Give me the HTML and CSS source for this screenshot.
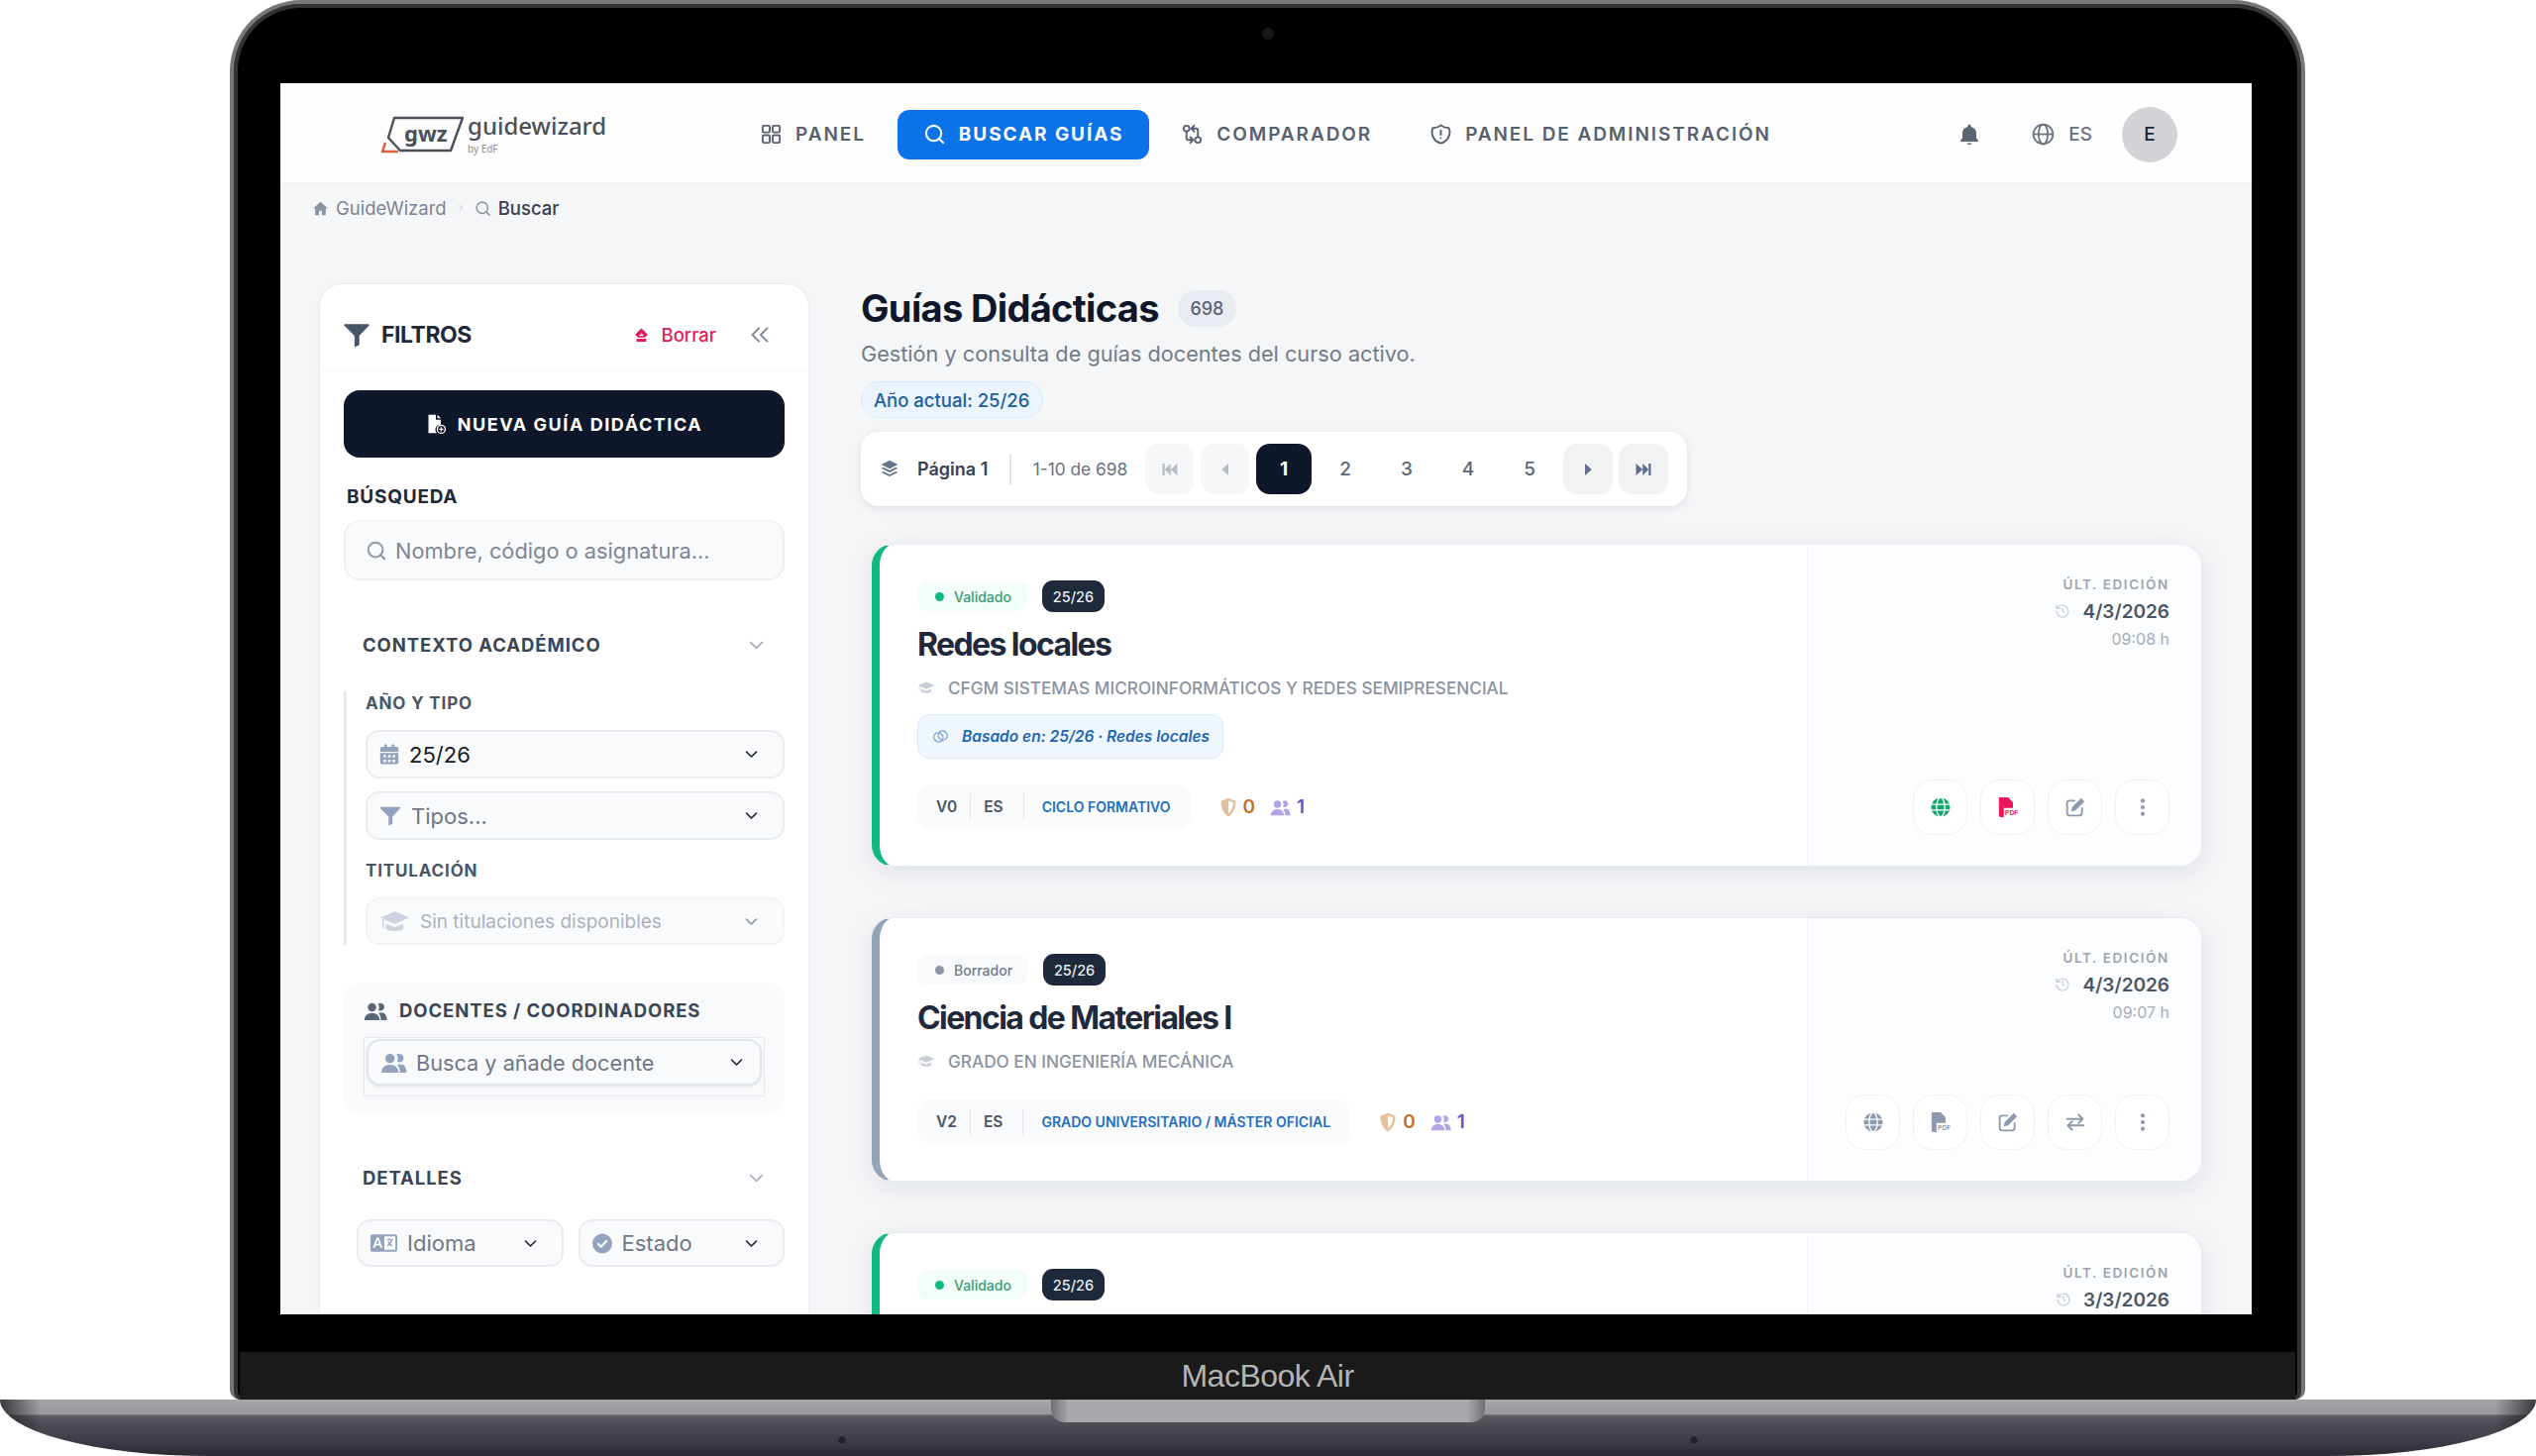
FILE: index.html
```html
<!DOCTYPE html>
<html lang="es">
<head>
  <meta charset="UTF-8">
  <title>GuideWizard - Buscar</title>
  <link rel="stylesheet" href="styles.css">
</head>
<body>
  <!-- icon sprite -->
  <svg class="sprite" xmlns="http://www.w3.org/2000/svg">
    <symbol id="i-grid" viewBox="0 0 24 24"><g fill="none" stroke="currentColor" stroke-width="2"><rect x="3" y="3" width="7.5" height="7" rx="1.5"/><rect x="13.5" y="3" width="7.5" height="7" rx="1.5"/><rect x="3" y="13" width="7.5" height="8" rx="1.5"/><rect x="13.5" y="13" width="7.5" height="8" rx="1.5"/></g></symbol>
    <symbol id="i-search" viewBox="0 0 24 24"><g fill="none" stroke="currentColor" stroke-width="2.2" stroke-linecap="round"><circle cx="11" cy="11" r="8"/><path d="M21 21l-4.4-4.4"/></g></symbol>
    <symbol id="i-compare" viewBox="0 0 24 24"><g fill="none" stroke="currentColor" stroke-width="2" stroke-linecap="round" stroke-linejoin="round"><circle cx="6" cy="6" r="3"/><circle cx="18" cy="18" r="3"/><path d="M11 6h5a2 2 0 0 1 2 2v7M14 9l-3-3 3-3M13 18H8a2 2 0 0 1-2-2V9M10 15l3 3-3 3"/></g></symbol>
    <symbol id="i-shield" viewBox="0 0 24 24"><g fill="none" stroke="currentColor" stroke-width="2" stroke-linecap="round" stroke-linejoin="round"><path d="M12 2.5a12 12 0 0 0 8.5 3A12 12 0 0 1 12 21.5 12 12 0 0 1 3.5 5.5a12 12 0 0 0 8.5-3"/><path d="M12 8v4.5M12 16h.01"/></g></symbol>
    <symbol id="i-bell" viewBox="0 0 24 24"><path fill="currentColor" d="M12 1.5a1.6 1.6 0 0 0-1.6 1.6v.8A7 7 0 0 0 5 10.8v3.6c0 1-.6 2-1.8 3.2-.6.7-.2 1.4.6 1.4h16.4c.8 0 1.2-.7.6-1.4C19.600 16.400 19 15.400 19 14.400v-3.600a7 7 0 0 0-5.400-6.900v-.8A1.600 1.600 0 0 0 12 1.500zM9.600 20.500a2.500 2.500 0 0 0 4.800 0z"/></symbol>
    <symbol id="i-globe" viewBox="0 0 24 24"><g fill="none" stroke="currentColor" stroke-width="1.7"><circle cx="12" cy="12" r="9.5"/><ellipse cx="12" cy="12" rx="4.5" ry="9.5"/><path d="M2.500 12h19"/></g></symbol>
    <symbol id="i-globe-solid" viewBox="0 0 24 24"><circle cx="12" cy="12" r="11.5" fill="currentColor"/><g fill="none" stroke="#fff" stroke-width="1.6"><ellipse cx="12" cy="12" rx="5" ry="11.5"/><path d="M.5 8.500h23M.5 15.500h23"/></g></symbol>
    <symbol id="i-home" viewBox="0 0 24 24"><path fill="currentColor" d="M12 2.500L1.500 12h3v9.500h5.500v-6.500h4v6.500h5.500V12h3z"/></symbol>
    <symbol id="i-chev-right" viewBox="0 0 24 24"><path fill="none" stroke="currentColor" stroke-width="2.4" d="M8 4l8 8-8 8"/></symbol>
    <symbol id="i-chev-down" viewBox="0 0 24 24"><path fill="none" stroke="currentColor" stroke-width="2.6" stroke-linecap="round" stroke-linejoin="round" d="M4 8l8 8 8-8"/></symbol>
    <symbol id="i-funnel" viewBox="0 0 24 24"><path fill="currentColor" d="M1 2h22c.8 0 1 .8.600 1.300L14.500 13v8.500L10 23.500V13L.4 3.300C0 2.800.2 2 1 2z"/></symbol>
    <symbol id="i-eraser" viewBox="0 0 24 24"><path fill="currentColor" d="M12 2l9 9-4 4H7l-4-4zM5 17h14v4H5z"/><path fill="#fff" d="M9 12l3-3 3 3-1 1h-4z"/></symbol>
    <symbol id="i-dchev" viewBox="0 0 24 24"><path fill="none" stroke="currentColor" stroke-width="2.2" stroke-linecap="round" stroke-linejoin="round" d="M11 4l-8 8 8 8M21 4l-8 8 8 8"/></symbol>
    <symbol id="i-file-plus" viewBox="0 0 24 24"><path fill="currentColor" d="M3 1h9v6h6v6a6 6 0 0 0-5 10H3zM14 1l4 4h-4z"/><circle cx="18.500" cy="18.500" r="4.800" fill="none" stroke="currentColor" stroke-width="1.6"/><path stroke="currentColor" stroke-width="1.6" d="M18.500 16v5M16 18.500h5"/></symbol>
    <symbol id="i-calendar" viewBox="0 0 24 24"><path fill="currentColor" d="M6 0h3v3h6V0h3v3h3a2 2 0 0 1 2 2v4H1V5a2 2 0 0 1 2-2h3zM1 10.500h22V22a2 2 0 0 1-2 2H3a2 2 0 0 1-2-2z"/><path fill="#fff" d="M5 13h3v3H5zM10.500 13h3v3h-3zM16 13h3v3h-3zM5 18.500h3v3H5zM10.500 18.500h3v3h-3zM16 18.500h3v3h-3z"/></symbol>
    <symbol id="i-cap" viewBox="0 0 32 24"><path fill="currentColor" d="M16 2L1 8.500l15 6.500 15-6.500zM7 14.500V20c3 3 15 3 18 0v-5.500l-9 4zM3 10v9h1.500v-9z"/></symbol>
    <symbol id="i-users" viewBox="0 0 28 24"><path fill="currentColor" d="M10 3a5 5 0 1 1 0 10 5 5 0 0 1 0-10zM20 3a4.500 4.500 0 1 1-2.500 8.300A7 7 0 0 0 17 4 4.500 4.500 0 0 1 20 3zM1 23c0-5 3.500-8.500 9-8.500s9 3.500 9 8.500zM20.500 23c0-3.500-1-6.400-3-8.300A9 9 0 0 1 21 14c4 0 6.500 3.500 6.500 9z"/></symbol>
    <symbol id="i-lang" viewBox="0 0 28 20"><path fill="currentColor" d="M2 1h24a2 2 0 0 1 2 2v14a2 2 0 0 1-2 2H2a2 2 0 0 1-2-2V3a2 2 0 0 1 2-2z"/><rect x="14.500" y="3" width="11.500" height="14" fill="#fff"/><path fill="#fff" d="M6.500 4h2l4 11h-2l-.8-2.500H5.300L4.500 15h-2zM5.900 10.800h3.200L7.500 6.200z"/><path fill="none" stroke="currentColor" stroke-width="1.500" d="M17 6.500h6.500M20 5v1.500M22 6.500c-.5 3-2.500 5.500-4.500 6.500M18.500 8.500c1 2 2.500 3.500 4.500 4.500"/></symbol>
    <symbol id="i-check" viewBox="0 0 24 24"><circle cx="12" cy="12" r="12" fill="currentColor"/><path fill="none" stroke="#fff" stroke-width="2.6" stroke-linecap="round" stroke-linejoin="round" d="M7 12.500l3.500 3.500L17 9"/></symbol>
    <symbol id="i-layers" viewBox="0 0 24 24"><path fill="currentColor" d="M12 1l10 5-10 5L2 6zM2 10.500l2.500-1.200L12 13l7.500-3.700 2.500 1.200-10 5zM2 15.500l2.500-1.200L12 18l7.500-3.700 2.500 1.200-10 5z"/></symbol>
    <symbol id="i-first" viewBox="0 0 24 24"><path fill="currentColor" d="M2 4h3v16H2zM13 4v16L5 12zM22 4v16l-9-8z"/></symbol>
    <symbol id="i-last" viewBox="0 0 24 24"><path fill="currentColor" d="M22 4h-3v16h3zM11 4v16l8-8zM2 4v16l9-8z"/></symbol>
    <symbol id="i-prev" viewBox="0 0 24 24"><path fill="currentColor" d="M16 4v16L7 12z"/></symbol>
    <symbol id="i-next" viewBox="0 0 24 24"><path fill="currentColor" d="M8 4v16l9-8z"/></symbol>
    <symbol id="i-link" viewBox="0 0 24 24"><g fill="none" stroke="currentColor" stroke-width="2.2"><rect x="1.500" y="6" width="14" height="15" rx="7" transform="rotate(-45 8.500 13.500)"/><rect x="8.500" y="3" width="14" height="15" rx="7" transform="rotate(-45 15.500 10.500)"/></g></symbol>
    <symbol id="i-shield-half" viewBox="0 0 24 24"><path fill="currentColor" opacity=".45" d="M12 1l9 3.500c0 8-2.500 15-9 18.500-6.500-3.500-9-10.500-9-18.500z"/><path fill="#fff" d="M12 4l6 2.300c0 5.500-2 10.500-6 13.200z"/></symbol>
    <symbol id="i-history" viewBox="0 0 24 24"><g fill="none" stroke="currentColor" stroke-width="1.8" stroke-linecap="round" stroke-linejoin="round"><path d="M3 12a9 9 0 1 0 3-6.700L3 8M3 3v5h5M12 7v5l3 2"/></g></symbol>
    <symbol id="i-pdf" viewBox="0 0 24 24"><path fill="currentColor" d="M1 0h11l6 6v7H7v11H3a2 2 0 0 1-2-2z"/><text class="pdf-label" x="8.500" y="22" fill="currentColor">PDF</text></symbol>
    <symbol id="i-edit" viewBox="0 0 24 24"><g fill="none" stroke="currentColor" stroke-width="2.2" stroke-linecap="round" stroke-linejoin="round"><path d="M20 13v6a3 3 0 0 1-3 3H5a3 3 0 0 1-3-3V7a3 3 0 0 1 3-3h6"/></g><path fill="currentColor" d="M19 1l4 4L12 16l-5 1 1-5z"/></symbol>
    <symbol id="i-swap" viewBox="0 0 24 24"><g fill="none" stroke="currentColor" stroke-width="2.4" stroke-linecap="round" stroke-linejoin="round"><path d="M2 8h19M16 3l5 5-5 5M22 16H3M8 11l-5 5 5 5"/></g></symbol>
    <symbol id="i-dots" viewBox="0 0 24 24"><circle cx="12" cy="4" r="2.500" fill="currentColor"/><circle cx="12" cy="12" r="2.500" fill="currentColor"/><circle cx="12" cy="20" r="2.500" fill="currentColor"/></symbol>
  </svg>

  <div class="lid">
    <div class="bezel-top"><span class="camera"></span></div>
    <div class="screen">

      <header class="topbar">
        <a class="logo">
          <svg class="logo-mark" viewBox="0 0 86 40">
            <path fill="none" stroke="#4b5058" stroke-width="2.4" stroke-linejoin="round" d="M14 3h69L71 36H20L8 23z"/>
            <path fill="none" stroke="#d9603c" stroke-width="2.4" d="M5 28L2 37h16"/>
            <text class="logo-gwz" x="24" y="27">gwz</text>
          </svg>
          <span class="logo-text">
            <span class="logo-name">guidewizard</span>
            <span class="logo-by">by EdF</span>
          </span>
        </a>
        <nav class="nav">
          <a class="nav-link"><svg class="nav-icon"><use href="#i-grid"/></svg>PANEL</a>
          <a class="nav-link nav-active"><svg class="nav-icon"><use href="#i-search"/></svg>BUSCAR GUÍAS</a>
          <a class="nav-link"><svg class="nav-icon"><use href="#i-compare"/></svg>COMPARADOR</a>
          <a class="nav-link"><svg class="nav-icon"><use href="#i-shield"/></svg>PANEL DE ADMINISTRACIÓN</a>
        </nav>
        <div class="top-right">
          <svg class="bell"><use href="#i-bell"/></svg>
          <span class="lang"><svg class="lang-icon"><use href="#i-globe"/></svg>ES</span>
          <span class="avatar">E</span>
        </div>
      </header>

      <div class="crumbs">
        <svg class="crumb-icon"><use href="#i-home"/></svg>
        <span>GuideWizard</span>
        <svg class="crumb-sep"><use href="#i-chev-right"/></svg>
        <svg class="crumb-icon"><use href="#i-search"/></svg>
        <span class="crumb-now">Buscar</span>
      </div>

      <div class="content">
        <aside class="sidebar">
          <div class="side-head">
            <svg class="side-funnel"><use href="#i-funnel"/></svg>
            <span class="side-title">FILTROS</span>
            <a class="clear"><svg class="clear-icon"><use href="#i-eraser"/></svg>Borrar</a>
            <svg class="collapse"><use href="#i-dchev"/></svg>
          </div>
          <div class="side-body">
            <button class="new-btn"><svg class="new-icon"><use href="#i-file-plus"/></svg>NUEVA GUÍA DIDÁCTICA</button>

            <div class="field-label">BÚSQUEDA</div>
            <div class="search">
              <svg class="search-icon"><use href="#i-search"/></svg>
              <span>Nombre, código o asignatura...</span>
            </div>

            <div class="section-head">
              <span>CONTEXTO ACADÉMICO</span>
              <svg class="section-chev"><use href="#i-chev-down"/></svg>
            </div>
            <div class="ctx">
              <div class="sub-label">AÑO Y TIPO</div>
              <div class="select select-value">
                <svg class="sel-icon"><use href="#i-calendar"/></svg><span class="sel-text">25/26</span>
                <svg class="sel-chev"><use href="#i-chev-down"/></svg>
              </div>
              <div class="select select-next">
                <svg class="sel-icon sel-funnel"><use href="#i-funnel"/></svg><span class="sel-text">Tipos...</span>
                <svg class="sel-chev"><use href="#i-chev-down"/></svg>
              </div>
              <div class="sub-label sub-label-gap">TITULACIÓN</div>
              <div class="select select-off">
                <svg class="sel-icon sel-cap"><use href="#i-cap"/></svg><span class="sel-text">Sin titulaciones disponibles</span>
                <svg class="sel-chev"><use href="#i-chev-down"/></svg>
              </div>
            </div>

            <div class="docentes">
              <div class="doc-head"><svg class="doc-icon"><use href="#i-users"/></svg>DOCENTES / COORDINADORES</div>
              <div class="doc-frame">
                <div class="select select-doc">
                  <svg class="sel-icon sel-users"><use href="#i-users"/></svg><span class="sel-text">Busca y añade docente</span>
                  <svg class="sel-chev"><use href="#i-chev-down"/></svg>
                </div>
              </div>
            </div>

            <div class="section-head">
              <span>DETALLES</span>
              <svg class="section-chev"><use href="#i-chev-down"/></svg>
            </div>
            <div class="detail-row">
              <div class="select">
                <svg class="sel-icon sel-lang"><use href="#i-lang"/></svg><span class="sel-text">Idioma</span>
                <svg class="sel-chev"><use href="#i-chev-down"/></svg>
              </div>
              <div class="select">
                <svg class="sel-icon"><use href="#i-check"/></svg><span class="sel-text">Estado</span>
                <svg class="sel-chev"><use href="#i-chev-down"/></svg>
              </div>
            </div>
          </div>
        </aside>

        <main class="main">
          <div class="title-row">
            <h1>Guías Didácticas</h1>
            <span class="count">698</span>
          </div>
          <p class="lead">Gestión y consulta de guías docentes del curso activo.</p>
          <span class="year-pill">Año actual: 25/26</span>

          <div class="pager">
            <svg class="pager-layers"><use href="#i-layers"/></svg>
            <span class="pager-page">Página 1</span>
            <span class="pager-div"></span>
            <span class="pager-range">1-10 de 698</span>
            <div class="pager-btns">
              <a class="pg pg-nav pg-off"><svg class="pg-icon"><use href="#i-first"/></svg></a>
              <a class="pg pg-nav pg-off"><svg class="pg-icon"><use href="#i-prev"/></svg></a>
              <a class="pg pg-on">1</a>
              <a class="pg">2</a>
              <a class="pg">3</a>
              <a class="pg">4</a>
              <a class="pg">5</a>
              <a class="pg pg-nav"><svg class="pg-icon"><use href="#i-next"/></svg></a>
              <a class="pg pg-nav"><svg class="pg-icon"><use href="#i-last"/></svg></a>
            </div>
          </div>

          <article class="card card-ok">
            <div class="card-main">
              <div class="card-tags">
                <span class="status status-ok"><i class="dot"></i>Validado</span>
                <span class="card-year">25/26</span>
              </div>
              <h2>Redes locales</h2>
              <div class="subject"><svg class="subject-icon"><use href="#i-cap"/></svg>CFGM SISTEMAS MICROINFORMÁTICOS Y REDES SEMIPRESENCIAL</div>
              <div class="based"><svg class="based-icon"><use href="#i-link"/></svg>Basado en: 25/26 · Redes locales</div>
              <div class="meta-row">
                <div class="meta">
                  <span class="meta-v">V0</span><span class="meta-lang">ES</span><span class="meta-type">CICLO FORMATIVO</span>
                </div>
                <span class="stat stat-orange"><svg class="stat-icon"><use href="#i-shield-half"/></svg>0</span>
                <span class="stat stat-purple"><svg class="stat-users"><use href="#i-users"/></svg>1</span>
              </div>
            </div>
            <div class="card-side">
              <div class="edit-label">ÚLT. EDICIÓN</div>
              <div class="edit-date"><svg class="edit-icon"><use href="#i-history"/></svg>4/3/2026</div>
              <div class="edit-time">09:08 h</div>
              <div class="actions">
                <a class="act act-green"><svg class="act-icon"><use href="#i-globe-solid"/></svg></a>
                <a class="act act-red"><svg class="act-icon"><use href="#i-pdf"/></svg></a>
                <a class="act"><svg class="act-icon"><use href="#i-edit"/></svg></a>
                <a class="act"><svg class="act-icon"><use href="#i-dots"/></svg></a>
              </div>
            </div>
          </article>

          <article class="card card-draft">
            <div class="card-main">
              <div class="card-tags">
                <span class="status status-draft"><i class="dot"></i>Borrador</span>
                <span class="card-year">25/26</span>
              </div>
              <h2>Ciencia de Materiales I</h2>
              <div class="subject"><svg class="subject-icon"><use href="#i-cap"/></svg>GRADO EN INGENIERÍA MECÁNICA</div>
              <div class="meta-row">
                <div class="meta">
                  <span class="meta-v">V2</span><span class="meta-lang">ES</span><span class="meta-type">GRADO UNIVERSITARIO / MÁSTER OFICIAL</span>
                </div>
                <span class="stat stat-orange"><svg class="stat-icon"><use href="#i-shield-half"/></svg>0</span>
                <span class="stat stat-purple"><svg class="stat-users"><use href="#i-users"/></svg>1</span>
              </div>
            </div>
            <div class="card-side">
              <div class="edit-label">ÚLT. EDICIÓN</div>
              <div class="edit-date"><svg class="edit-icon"><use href="#i-history"/></svg>4/3/2026</div>
              <div class="edit-time">09:07 h</div>
              <div class="actions">
                <a class="act"><svg class="act-icon"><use href="#i-globe-solid"/></svg></a>
                <a class="act"><svg class="act-icon"><use href="#i-pdf"/></svg></a>
                <a class="act"><svg class="act-icon"><use href="#i-edit"/></svg></a>
                <a class="act"><svg class="act-icon"><use href="#i-swap"/></svg></a>
                <a class="act"><svg class="act-icon"><use href="#i-dots"/></svg></a>
              </div>
            </div>
          </article>

          <article class="card card-ok card-cut">
            <div class="card-main">
              <div class="card-tags">
                <span class="status status-ok"><i class="dot"></i>Validado</span>
                <span class="card-year">25/26</span>
              </div>
            </div>
            <div class="card-side">
              <div class="edit-label">ÚLT. EDICIÓN</div>
              <div class="edit-date"><svg class="edit-icon"><use href="#i-history"/></svg>3/3/2026</div>
            </div>
          </article>
        </main>
      </div>
    </div>
    <div class="bezel-gap"></div>
    <div class="chin">MacBook Air</div>
  </div>

  <div class="base">
    <div class="notch"></div>
    <div class="screws"><i class="screw"></i><i class="screw"></i></div>
  </div>
</body>
</html>
```

FILE: styles.css
```css
* {
  box-sizing: border-box;
}
body {
  margin: 0;
  height: 1470px;
  overflow: hidden;
  background: #fff;
  font-family: Inter, "Liberation Sans", sans-serif;
  color: #1e293b;
}
.sprite {
  display: none;
}
svg {
  display: block;
  flex: none;
}
.pdf-label {
  font-family: Inter, sans-serif;
  font-size: 8px;
  font-weight: 700;
}

/* laptop */
.lid {
  width: 2095px;
  height: 1413px;
  margin-left: 232px;
  display: flex;
  flex-direction: column;
  background: #000;
  border: 4px solid #77777a;
  border-bottom: 0;
  border-radius: 72px 72px 10px 10px;
  box-shadow: inset 0 0 0 4px #333335;
}
.bezel-top {
  height: 80px;
  flex: none;
  display: flex;
  align-items: center;
  justify-content: center;
  padding-bottom: 20px;
}
.camera {
  width: 12px;
  height: 12px;
  border-radius: 50%;
  background: #16171d;
}
.screen {
  width: 1990px;
  height: 1243px;
  margin-left: 47px;
  flex: none;
  display: flex;
  flex-direction: column;
  overflow: hidden;
  background: #f4f6f8;
}
.bezel-gap {
  height: 38px;
  flex: none;
}
.chin {
  flex: 1;
  display: flex;
  align-items: center;
  justify-content: center;
  margin: 0 6px;
  background: #1a1a1a;
  color: #b4b4b4;
  font-size: 32px;
  letter-spacing: -0.5px;
  font-family: "Liberation Sans", sans-serif;
}
.base {
  height: 57px;
  display: flex;
  flex-direction: column;
  align-items: center;
  background:
    linear-gradient(90deg, rgba(20, 20, 24, 0.75), rgba(20, 20, 24, 0) 1.6%, rgba(20, 20, 24, 0) 98.4%, rgba(20, 20, 24, 0.75)),
    linear-gradient(#a3a5a8 0, #98999d 15px, #5f6065 16px, #4f5057 22px, #383942 45px, #282931 100%);
  border-radius: 0 0 212px 212px / 0 0 57px 57px;
}
.notch {
  width: 438px;
  height: 23px;
  flex: none;
  background: linear-gradient(90deg, #6f7074, #a7a8ab 4%, #a7a8ab 96%, #6f7074);
  border-radius: 0 0 14px 14px;
}
.screws {
  width: 870px;
  margin-top: 13px;
  display: flex;
  justify-content: space-between;
}
.screw {
  width: 10px;
  height: 10px;
  border-radius: 50%;
  background: #24252b;
  border: 1px solid #484951;
}

/* top bar */
.topbar {
  height: 101px;
  flex: none;
  display: flex;
  align-items: center;
  padding: 3px 75px 0 101px;
  background: #fdfdfe;
  border-bottom: 1px solid #eef1f4;
}
.logo {
  width: 227px;
  margin-right: 130px;
  display: flex;
  align-items: center;
  gap: 2px;
}
.logo-mark {
  width: 86px;
  height: 40px;
}
.logo-gwz {
  font-family: "Noto Sans", sans-serif;
  font-size: 22px;
  font-weight: 700;
  fill: #4b5058;
}
.logo-text {
  display: flex;
  flex-direction: column;
  margin-bottom: 5px;
  color: #4b5058;
  font-family: "Noto Sans", sans-serif;
}
.logo-name {
  font-size: 24px;
  font-weight: 500;
}
.logo-by {
  font-size: 10px;
  color: #8a8f97;
}
.nav {
  display: flex;
  gap: 6px;
}
.nav-link {
  height: 50px;
  display: flex;
  align-items: center;
  gap: 13px;
  padding: 0 26px;
  border-radius: 12px;
  color: #58616e;
  font-size: 19px;
  font-weight: 600;
  letter-spacing: 0.101em;
}
.nav-active {
  background: #0b72e7;
  color: #fff;
  font-weight: 700;
}
.nav-icon {
  width: 23px;
  height: 23px;
}
.top-right {
  margin-left: auto;
  display: flex;
  align-items: center;
}
.bell {
  width: 24px;
  height: 24px;
  color: #5b6472;
  margin-right: 50px;
}
.lang {
  display: flex;
  align-items: center;
  gap: 13px;
  color: #6b7280;
  font-size: 19px;
  font-weight: 500;
  margin-right: 30px;
}
.lang-icon {
  width: 25px;
  height: 25px;
}
.avatar {
  width: 56px;
  height: 56px;
  display: flex;
  align-items: center;
  justify-content: center;
  border-radius: 50%;
  background: #d4d4d8;
  box-shadow: 0 0 0 3px #fff;
  color: #1f2430;
  font-size: 19px;
  font-weight: 500;
}

/* breadcrumb */
.crumbs {
  height: 50px;
  flex: none;
  display: flex;
  align-items: center;
  gap: 7px;
  padding-left: 32px;
  color: #7b8494;
  font-size: 18.5px;
}
.crumb-icon {
  width: 17px;
  height: 17px;
  color: #8b94a3;
}
.crumb-sep {
  width: 10px;
  height: 12px;
  margin: 0 2px;
  color: #c3c8d0;
}
.crumb-now {
  color: #374151;
  font-weight: 500;
}

.content {
  flex: 1;
  min-height: 0;
  display: flex;
  gap: 52px;
  padding: 51px 50px 0 39px;
}

/* sidebar */
.sidebar {
  width: 495px;
  flex: none;
  background: #fff;
  border: 1px solid #eceff3;
  border-radius: 24px 24px 0 0;
  box-shadow: 0 1px 6px rgba(15, 23, 42, 0.03);
}
.side-head {
  height: 88px;
  display: flex;
  align-items: center;
  padding: 15px 39px 0 24px;
  border-bottom: 1px solid #f5f6f8;
}
.side-funnel {
  width: 26px;
  height: 26px;
  color: #475569;
  margin-right: 12px;
}
.side-title {
  font-size: 23px;
  font-weight: 700;
  color: #1f2937;
  letter-spacing: -0.02em;
}
.clear {
  margin-left: auto;
  display: flex;
  align-items: center;
  gap: 12px;
  color: #e11d5b;
  font-size: 18.5px;
  font-weight: 500;
}
.clear-icon {
  width: 17px;
  height: 17px;
}
.collapse {
  width: 20px;
  height: 20px;
  margin-left: 34px;
  color: #7c8797;
}
.side-body {
  padding: 19px 24px 0;
}
.new-btn {
  width: 100%;
  height: 68px;
  display: flex;
  align-items: center;
  justify-content: center;
  gap: 12px;
  border: 0;
  border-radius: 16px;
  background: #0f172a;
  color: #fff;
  font-family: inherit;
  font-size: 18px;
  font-weight: 700;
  letter-spacing: 0.086em;
}
.new-icon {
  width: 20px;
  height: 20px;
}
.field-label {
  margin: 29px 0 12px 3px;
  font-size: 19px;
  line-height: 22px;
  font-weight: 700;
  letter-spacing: 0.04em;
  color: #1e293b;
}
.search {
  height: 61px;
  display: flex;
  align-items: center;
  gap: 8px;
  padding-left: 20px;
  border: 2px solid #eef1f5;
  border-radius: 16px;
  background: #f9fafc;
  color: #7d8694;
  font-size: 21.8px;
}
.search-icon {
  width: 22px;
  height: 22px;
  color: #8c98aa;
}
.section-head {
  height: 28px;
  margin-top: 51px;
  display: flex;
  align-items: center;
  justify-content: space-between;
  padding: 0 20px 0 19px;
  font-size: 18.5px;
  font-weight: 700;
  letter-spacing: 0.05em;
  color: #3b4554;
}
.section-chev {
  width: 17px;
  height: 17px;
  color: #a8b0bc;
}
.ctx {
  margin-top: 33px;
  padding-left: 19px;
  border-left: 3px solid #e5e9ef;
}
.sub-label {
  margin-bottom: 15px;
  font-size: 17px;
  line-height: 24px;
  font-weight: 700;
  letter-spacing: 0.05em;
  color: #4b5563;
}
.sub-label-gap {
  margin-top: 19px;
}
.select {
  height: 49px;
  display: flex;
  align-items: center;
  padding: 0 24px 0 12px;
  border: 2px solid #e9edf2;
  border-radius: 14px;
  background: #f9fafc;
  color: #6f7785;
  font-size: 22px;
}
.select-next {
  margin-top: 13px;
}
.select-value {
  color: #16191f;
}
.select-off {
  height: 48px;
  border-color: #f1f3f6;
  color: #aab2be;
  font-size: 19px;
}
.select-off .sel-chev {
  color: #8a93a0;
}
.select-doc {
  height: 47px;
  padding-right: 16px;
  box-shadow: 0 1px 3px rgba(15, 23, 42, 0.1);
  border-color: #e2e6ec;
  font-size: 21.7px;
}
.sel-icon {
  width: 20px;
  height: 21px;
  margin-right: 10px;
  color: #94a3bd;
}
.sel-funnel {
  width: 22px;
}
.sel-cap {
  width: 31px;
  height: 24px;
  color: #ccd3de;
}
.sel-users {
  width: 27px;
  height: 23px;
  margin-right: 9px;
}
.sel-lang {
  width: 27px;
  height: 20px;
}
.sel-chev {
  width: 15px;
  height: 15px;
  margin-left: auto;
  color: #20242c;
}
.docentes {
  margin-top: 38px;
  height: 132px;
  padding: 16px 20px 0;
  border-radius: 16px;
  background: #f8fafc;
}
.doc-head {
  height: 24px;
  display: flex;
  align-items: center;
  gap: 12px;
  margin-bottom: 15px;
  font-size: 18.5px;
  font-weight: 700;
  letter-spacing: 0.05em;
  color: #3b4554;
}
.doc-icon {
  width: 24px;
  height: 21px;
  color: #5b6677;
}
.doc-frame {
  height: 60px;
  padding: 1px 2px;
  border: 1px solid #e7e9ee;
}
.detail-row {
  display: flex;
  gap: 15px;
  margin-top: 28px;
  padding-left: 13px;
}
.detail-row .select {
  flex: 1;
  height: 48px;
  min-width: 0;
}

/* main column */
.main {
  flex: 1;
  min-width: 0;
  display: flex;
  flex-direction: column;
  align-items: flex-start;
  padding-top: 2px;
}
.main > * {
  flex: none;
}
.title-row {
  display: flex;
  align-items: center;
  gap: 19px;
}
h1 {
  margin: 0;
  font-size: 38px;
  line-height: 46px;
  font-weight: 700;
  letter-spacing: -0.017em;
  color: #0f172a;
}
.count {
  width: 59px;
  height: 37px;
  display: flex;
  align-items: center;
  justify-content: center;
  border-radius: 18px;
  background: #e8ecf2;
  color: #5a6473;
  font-size: 18px;
  font-weight: 500;
}
.lead {
  margin: 8px 0 0;
  font-size: 21.7px;
  line-height: 30px;
  color: #727b89;
}
.year-pill {
  height: 37px;
  margin-top: 13px;
  display: flex;
  align-items: center;
  padding: 0 13px 0 12px;
  border: 1px solid #dbe9fa;
  border-radius: 18px;
  background: #ebf3fd;
  color: #20609f;
  font-size: 18.5px;
  font-weight: 500;
}
.pager {
  width: 834px;
  height: 75px;
  margin-top: 14px;
  display: flex;
  align-items: center;
  padding: 0 19px;
  border-radius: 18px;
  background: #fff;
  box-shadow: 0 2px 8px rgba(15, 23, 42, 0.1);
}
.pager-layers {
  width: 20px;
  height: 22px;
  margin-right: 18px;
  color: #64748b;
}
.pager-page {
  font-size: 18px;
  font-weight: 600;
  color: #374151;
  white-space: nowrap;
}
.pager-div {
  width: 1.5px;
  height: 30px;
  margin: 0 22px;
  background: #dfe3e8;
}
.pager-range {
  font-size: 17.3px;
  color: #667080;
  white-space: nowrap;
}
.pager-btns {
  margin-left: auto;
  display: flex;
  gap: 6px;
}
.pg {
  width: 56px;
  height: 51px;
  display: flex;
  align-items: center;
  justify-content: center;
  border-radius: 14px;
  color: #5c6675;
  font-size: 19px;
  font-weight: 500;
}
.pg-nav {
  width: 50px;
  background: #f1f2f4;
  color: #5f6f8b;
}
.pg-off {
  background: #f6f7f8;
  color: #b5bcc8;
}
.pg-on {
  background: #0f172a;
  color: #fff;
  font-weight: 700;
}
.pg-icon {
  width: 18px;
  height: 18px;
}

/* guide cards */
.card {
  width: 1343px;
  margin: 38px 0 13px 11px;
  display: flex;
  background: #fff;
  border: 1px solid #e8ebef;
  border-left: 8px solid #10b981;
  border-radius: 22px;
  box-shadow: 0 6px 28px rgba(15, 23, 42, 0.09);
}
.card-draft {
  border-left-color: #94a3b8;
}
.card-cut {
  min-height: 300px;
}
.card-main {
  flex: 1;
  min-width: 0;
  padding: 36px 38px 37px;
}
.card-tags {
  height: 32px;
  display: flex;
  align-items: center;
  gap: 15px;
}
.status {
  height: 30px;
  display: flex;
  align-items: center;
  gap: 10px;
  padding: 0 16px 0 18px;
  border-radius: 10px;
  font-size: 14px;
  font-weight: 500;
}
.status-ok {
  background: #f3fdf8;
  color: #3c9c74;
}
.status-draft {
  background: #f7f9fb;
  color: #6f7a89;
}
.dot {
  width: 9px;
  height: 9px;
  border-radius: 50%;
  background: currentColor;
}
.status-ok .dot {
  background: #10b981;
}
.status-draft .dot {
  background: #8e97a5;
}
.card-year {
  width: 63px;
  height: 32px;
  display: flex;
  align-items: center;
  justify-content: center;
  border-radius: 11px;
  background: #1e293b;
  color: #e8edf3;
  font-size: 14.5px;
  font-weight: 500;
}
h2 {
  margin: 13px 0 0;
  font-size: 32px;
  line-height: 40px;
  font-weight: 700;
  letter-spacing: -0.05em;
  color: #1e293b;
}
.subject {
  height: 22px;
  margin: 12px 0 16px;
  display: flex;
  align-items: center;
  gap: 13px;
  font-size: 17.2px;
  font-weight: 500;
  color: #8b93a1;
  white-space: nowrap;
}
.subject-icon {
  width: 18px;
  height: 14px;
  color: #c8ced8;
}
.based {
  width: 309px;
  height: 45px;
  display: flex;
  align-items: center;
  gap: 14px;
  padding-left: 15px;
  border: 1px solid #dbe8fa;
  border-radius: 12px;
  background: #f0f6fe;
  color: #1f66b2;
  font-size: 15.5px;
  font-weight: 600;
  font-style: italic;
  white-space: nowrap;
}
.based-icon {
  width: 15px;
  height: 15px;
  color: #7aa2d6;
}
.meta-row {
  margin-top: 28px;
  display: flex;
  align-items: center;
}
.based + .meta-row {
  margin-top: 26px;
}
.meta {
  height: 45px;
  display: flex;
  align-items: center;
  padding: 0 20px 0 19px;
  border-radius: 14px;
  background: #f8fafc;
  font-size: 15.5px;
  font-weight: 600;
  color: #4b5563;
  white-space: nowrap;
}
.meta-v {
  padding-right: 13px;
  border-right: 1.5px solid #e3e6ea;
}
.meta-lang {
  padding: 0 20px 0 13px;
  border-right: 1.5px solid #e3e6ea;
}
.meta-v,
.meta-lang {
  line-height: 28px;
}
.meta-type {
  padding-left: 18px;
  color: #1f6fbf;
  font-size: 14px;
}
.stat {
  display: flex;
  align-items: center;
  font-size: 19px;
  font-weight: 600;
}
.stat-orange {
  margin-left: 28px;
  color: #c2702a;
}
.stat-purple {
  margin-left: 15px;
  color: #6d4fc4;
}
.stat-icon {
  width: 20px;
  height: 20px;
  margin-right: 5px;
}
.stat-users {
  width: 21px;
  height: 18px;
  margin-right: 6px;
  color: #b4a4e6;
}
.card-side {
  width: 398px;
  flex: none;
  display: flex;
  flex-direction: column;
  align-items: flex-end;
  padding: 31px 32px 31px 0;
  background: #fcfdfe;
  border-left: 1px solid #f1f4f8;
  border-radius: 0 22px 22px 0;
}
.edit-label {
  font-size: 13.5px;
  line-height: 18px;
  font-weight: 600;
  letter-spacing: 0.12em;
  color: #9ca3af;
}
.edit-date {
  height: 28px;
  margin-top: 4px;
  display: flex;
  align-items: center;
  gap: 12px;
  font-size: 19px;
  font-weight: 600;
  color: #4b5563;
}
.edit-icon {
  width: 16px;
  height: 16px;
  color: #c7ccd4;
}
.edit-time {
  margin-top: 4px;
  font-size: 16px;
  line-height: 20px;
  color: #a6adb9;
}
.actions {
  margin-top: auto;
  display: flex;
  gap: 13px;
}
.act {
  width: 55px;
  height: 56px;
  display: flex;
  align-items: center;
  justify-content: center;
  border: 1.5px solid #eef0f4;
  border-radius: 20px;
  background: #fff;
  color: #8d99ad;
}
.act-green {
  color: #13a36f;
}
.act-red {
  color: #e9185c;
}
.act-icon {
  width: 20px;
  height: 20px;
}
```
